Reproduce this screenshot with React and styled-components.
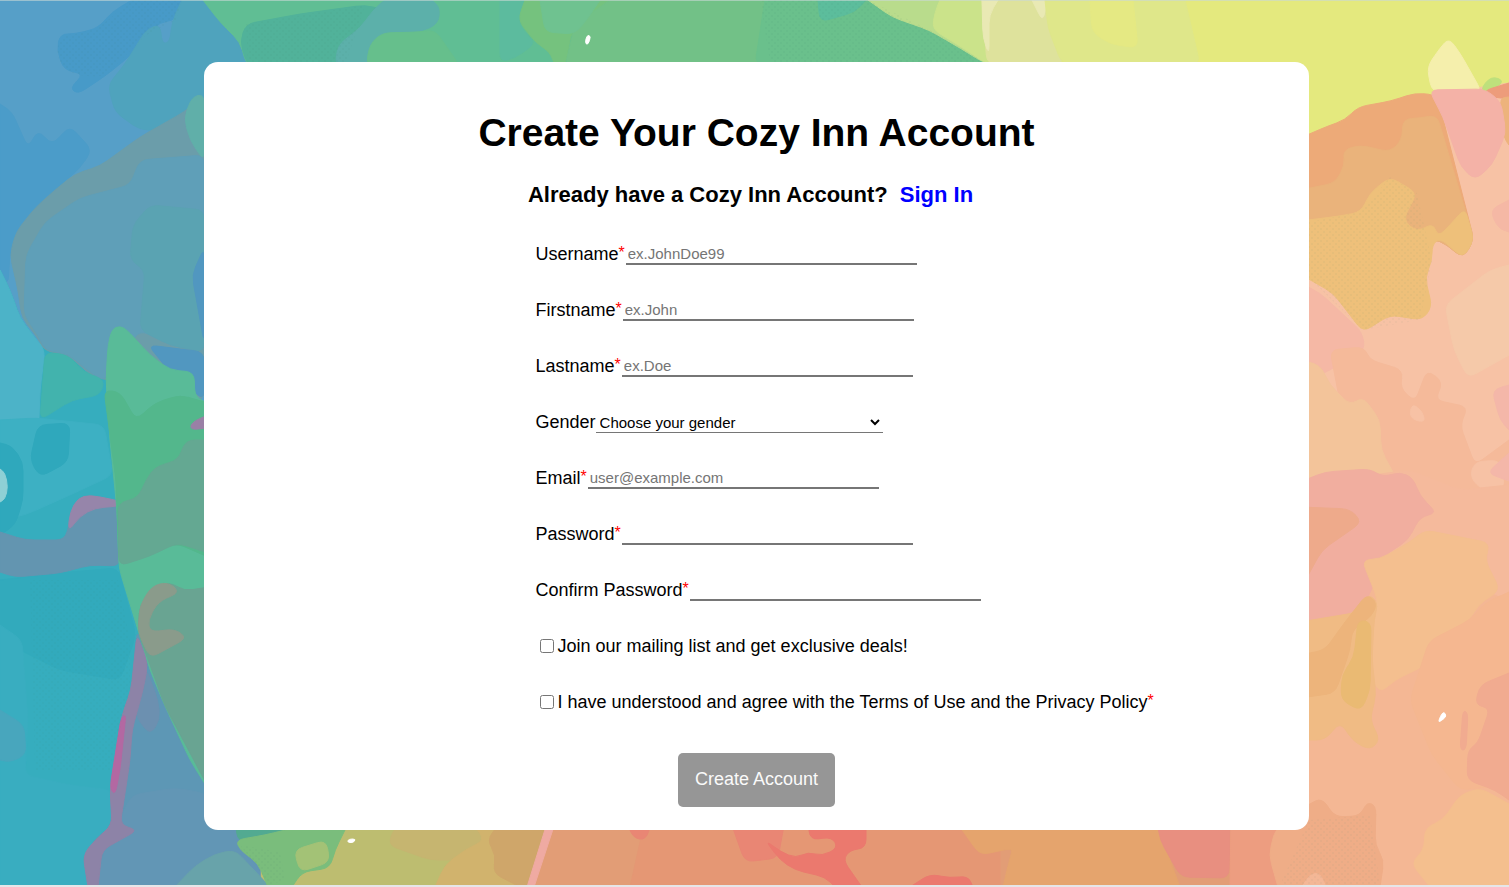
import React from "react";
import styled, { createGlobalStyle } from "styled-components";

const GlobalStyle = createGlobalStyle`
  *, *::before, *::after { box-sizing: border-box; }
  body {
    margin: 0;
    background: #e6e6e8;
    color: #000;
    font-family: "Liberation Sans", Arial, sans-serif;
    font-size: 18px;
    line-height: 24px;
  }
`;

const Page = styled.div`
  display: grid;
  grid-template: minmax(0, 1fr) / minmax(0, 1fr);
  min-height: 100vh;
  border-bottom: 2px solid #e6e6e8;
`;

const Backdrop = styled.svg`
  grid-area: 1 / 1;
  width: 100%;
  height: 100%;
  min-height: 0;
  contain: size;
`;

const Main = styled.main`
  grid-area: 1 / 1;
  z-index: 1;
  padding: 62px 200px 55px 204px;

  @media (max-width: 1200px) {
    padding: 32px;
  }
`;

const Card = styled.section`
  display: flex;
  flex-direction: column;
  padding: 48px 0 23px;
  border-radius: 14px;
  background: #fff;
`;

const Title = styled.h1`
  margin: 0 0 26px;
  font-size: 39px;
  line-height: 46px;
  text-align: center;
`;

const Prompt = styled.h2`
  display: flex;
  justify-content: center;
  gap: 12px;
  margin: 0 0 34px;
  padding-right: 12px;
  font-size: 22px;
  line-height: 26px;
`;

const SignInLink = styled.a`
  color: #00f;
  text-decoration: none;
`;

const Form = styled.form`
  display: flex;
  flex-direction: column;
`;

const Fields = styled.div`
  display: flex;
  flex-direction: column;
  gap: 32px;
  padding-left: 30%;

  @media (max-width: 1200px) {
    padding-left: 32px;
  }
`;

const Row = styled.div`
  display: flex;
  align-items: ${(p) => (p.$check ? "center" : "flex-start")};
  min-height: 24px;
`;

const Star = styled.span`
  margin-right: 1px;
  color: #f00;
  font-size: 16px;
  line-height: 16px;
  vertical-align: 2px;
`;

const TextInput = styled.input`
  width: 291px;
  height: 21px;
  margin: 2px 0 0;
  padding: 1px 2px;
  border: 0;
  border-bottom: 2px solid #767676;
  border-radius: 0;
  outline: 0;
  background: transparent;
  font: 15px/17px "Liberation Sans", Arial, sans-serif;

  &::placeholder { color: #757575; }
`;

const Select = styled.select`
  width: 287px;
  height: 21px;
  margin: 2px 0 0;
  padding: 0;
  border: 0;
  border-bottom: 1px solid #767676;
  border-radius: 0;
  background: transparent;
  color: #000;
  font: 15px/17px "Liberation Sans", Arial, sans-serif;
`;

const CheckBox = styled.input`
  width: 14px;
  height: 14px;
  margin: 0 4px;
`;

const SubmitButton = styled.button`
  align-self: center;
  height: 54px;
  margin-top: 39px;
  padding: 0 17px 2px;
  border: 0;
  border-radius: 5px;
  background: #969696;
  color: #fafafa;
  font: 18px/24px "Liberation Sans", Arial, sans-serif;
`;

const textFields = [
  { id: "username", label: "Username", placeholder: "ex.JohnDoe99", type: "text" },
  { id: "firstname", label: "Firstname", placeholder: "ex.John", type: "text" },
  { id: "lastname", label: "Lastname", placeholder: "ex.Doe", type: "text" },
];

const accountFields = [
  { id: "email", label: "Email", placeholder: "user@example.com", type: "email" },
  { id: "password", label: "Password", type: "password" },
  { id: "confirm", label: "Confirm Password", type: "password" },
];

// Watercolour patches, painted back to front: [fill, path].
const patches = [
  // ground
  ["#569fc8", "M0 0H760V600H0Z"],
  ["#36adbe", "M0 380H130V887H0Z"],
  ["#5d97b4", "M130 600H260V887H130Z"],
  ["#bdbd70", "M235 800H560V887H235Z"],
  // blue corner
  ["#4b9cc9", "M0 104L12 112 20 130 28 148 38 130 52 145 70 126 92 150 80 168 55 190 35 210 10 250 8 285 0 272Z"],
  ["#479ac8", "M57 50L60 34 75 34 98 28 112 12 132 0H182L176 20 160 22 145 36 130 56 105 76 78 94 70 88 84 74 64 70Z"],
  ["#4fa3bd", "M182 0H206L245 40 250 62V130H140L115 112 108 85 125 64 146 30 160 24 162 44 170 42 172 22Z"],
  ["#6b9daa", "M10 255L16 232 35 208 55 190 75 174 100 166 140 137 184 112 204 96V400H140L95 378 68 356 45 352 38 338 22 318 18 290Z"],
  ["#5f9fb8", "M26 255L45 222 80 198 130 185 140 160 204 155V352L170 345 140 330 105 380 95 376 68 354 45 350 38 335 24 315Z"],
  ["#5aa3b2", "M150 205L204 210V352L170 345 140 330 145 270 130 260 133 225Z"],
  ["#5197c0", "M204 248L192 275 204 342ZM148 345L204 352V400L170 372Z"],
  ["#60afa9", "M204 94L192 97 184 118 190 140 204 161V128Z"],
  // cyan side
  ["#36adbe", "M0 270L10 290 20 318 35 338 45 352 68 356 95 380 112 380 125 500 144 640 100 887H0Z"],
  ["#4cb3c8", "M0 270L10 290 20 318 35 338 45 350 40 390 36 500 0 520Z"],
  ["#42b3ad", "M45 352L68 355 84 372 105 380 100 395 72 400 40 420Z"],
  ["#3db0c3", "M0 420L36 418 104 425 113 475 70 495 25 515 0 520Z"],
  ["#2fa8bc", "M38 425L70 423 68 462 40 477 30 460ZM0 443L12 446 23 462 23 500 15 525 0 535Z"],
  ["#8ed0d5", "M0 469L5 473 8 487 5 499 0 502Z"],
  ["#32aabc", "M0 580L60 573 118 568 136 635 120 680 60 670 0 640Z"],
  ["#39adc0", "M0 625L22 640 28 720 25 775 70 785 112 790 112 825 90 845 95 887H0Z"],
  ["#48a6bd", "M0 710L24 725 26 755 10 762 0 760Z"],
  ["#6395b0", "M0 532L25 540 65 540 70 520 78 502 90 496 120 503V566L90 565 60 573 15 577 0 572Z"],
  ["#9685aa", "M68 532L70 512 78 498 90 495 120 501V506L95 508 80 516Z"],
  // slate wedge at the lower left
  ["#5d97b5", "M137 630L148 650 165 690 204 780 260 830V887H88L84 855 95 840 112 825 112 785 124 715 132 690Z"],
  ["#6c90b0", "M146 668L158 700 160 720 150 735 135 715Z"],
  ["#6296b5", "M132 795L175 788 204 793 260 830V887H96L104 850Z"],
  // green tongue
  ["#59bb98", "M106 380L108 345 112 329 120 326 127 330 150 355 170 370 194 372 195 398 215 405V800L190 760 165 706 150 670 138 630 119 568 117 510 110 440Z"],
  ["#53b78c", "M104 390L120 392 136 420 155 403 180 395 215 405V560L176 543 119 565 116 480Z"],
  ["#64a892", "M215 440H186L178 460 155 467 146 480 138 498 118 503 119 566 150 556 177 543 215 555Z"],
  ["#69a492", "M138 632L140 605 155 588 170 582 184 591 215 586V800L165 706Z"],
  ["#8a9b8b", "M138 632L140 605 152 586 168 582 180 592 158 602 148 620 150 632 175 629 187 638 150 658Z"],
  ["#9a80a6", "M215 412L192 422 190 430 215 427Z"],
  ["#8d83a7", "M137 634L148 664 143 690 132 730 130 760 124 800 120 825 138 830 102 850 98 887H88L83 855 95 840 112 825 110 788 122 715 131 690Z"],
  ["#b368a2", "M121 718L126 714 120 770 115 795 110 788Z"],
  // green top band
  ["#60be94", "M203 0H1000V66H247L240 42 220 22Z"],
  ["#51b29a", "M240 42L246 24 300 14 365 5 385 10 375 25 355 66H248Z"],
  ["#5cb0aa", "M335 66L338 45 360 28 375 8 385 0H432L440 8 438 24 420 32 382 33 366 66Z"],
  ["#66bf8c", "M366 66L370 44 382 33 420 32 435 30 460 66Z"],
  ["#5cbb9e", "M500 0H525L518 18 522 30 536 43 515 58 500 62Z"],
  ["#75c27e", "M525 0H610L590 24 572 30 565 66H555L550 52 536 43 518 20Z"],
  ["#72c187", "M610 0H780L765 30 760 66H565L575 25Z"],
  ["#6fc290", "M540 0H600L588 18 575 34 545 32Z"],
  ["#6ac08c", "M765 0H868L895 18 930 28 988 64H755Z"],
  ["#5cbd9c", "M818 0H866L855 12 820 22Z"],
  // yellow sky
  ["#e4e97e", "M1040 0H1509V150H1300V64H1040Z"],
  ["#b9dc8c", "M868 0H1000V64H986L960 48 929 30 892 17Z"],
  ["#cbe38a", "M940 0H1000V64H987L960 46 932 29 935 12Z"],
  ["#dee29c", "M982 0H1045L1064 64H987Z"],
  ["#e9e9b4", "M982 0H998L989 15 989 55 983 38ZM1032 0H1047L1043 22Z"],
  ["#dfe78a", "M1045 0H1185L1200 64H1062L1048 28Z"],
  ["#e5e983", "M1090 0H1133L1138 48 1110 44 1092 32Z"],
  // coral and peach side
  ["#f7c2a5", "M1300 170L1431 95 1509 83V530H1300Z"],
  ["#edaa78", "M1300 138L1328 126 1345 120 1358 107 1391 101 1415 93 1437 95 1474 240 1463 258 1440 240 1300 240Z"],
  ["#eab37b", "M1300 190L1335 183 1345 165 1343 150 1360 145 1390 152 1402 140 1403 119 1420 118 1437 115 1474 240 1463 258 1440 240 1300 240Z"],
  ["#eec07a", "M1300 221L1340 216 1361 212 1370 193 1390 177 1417 193 1403 220 1417 232 1433 223 1438 237 1450 225 1465 208 1474 240 1463 258 1440 238 1432 245 1432 261 1425 277 1432 307 1422 320 1390 315 1363 332 1333 293 1300 274Z"],
  ["#f5efac", "M1432 92L1427 67 1440 48 1449 38 1460 53 1482 92Z"],
  ["#bee07c", "M1480 90L1491 76 1505 81 1490 92Z"],
  ["#ed9c7b", "M1483 91L1509 83V98H1493Z"],
  ["#edb37c", "M1500 98L1509 97V145L1504 138Z"],
  ["#f4b2a7", "M1429 90L1485 89 1501 102 1506 133 1492 165 1475 180 1461 167 1443 117Z"],
  ["#f5b8a5", "M1300 283L1320 293 1362 332 1365 350 1330 370 1309 380 1300 370ZM1509 200L1490 210 1498 228 1509 232Z"],
  ["#f5c9a9", "M1509 265L1490 270 1445 305 1454 350 1468 378 1509 355Z"],
  ["#f5ba9a", "M1330 350L1364 347 1370 360 1403 370 1400 388 1415 402 1427 370 1443 382 1435 400 1468 407 1460 425 1475 465 1509 440V590L1425 560 1390 510 1300 500V410L1340 402Z"],
  ["#f3c49a", "M1300 360L1320 365 1330 385 1350 405 1363 397 1380 420 1381 450 1400 485 1300 485Z"],
  ["#f7c2a5", "M1412 403L1423 412 1425 423 1409 418ZM1474 462L1470 478 1485 492 1505 488 1500 460Z"],
  ["#f4b7a9", "M1509 385L1492 390 1500 420 1509 430ZM1509 453L1487 473 1509 481Z"],
  ["#f4b794", "M1300 530H1509V887H1300Z"],
  ["#f5ba9c", "M1300 485L1410 470 1460 490 1509 485V600L1485 590 1440 550 1300 560Z"],
  ["#f1ae9f", "M1300 482L1325 472 1370 469 1383 477 1400 472 1413 478 1420 496 1437 513 1420 517 1408 540 1378 560 1372 590 1363 605 1340 618 1300 623Z"],
  ["#eeaa8b", "M1300 507L1350 509 1362 522 1345 534 1322 550 1300 590Z"],
  ["#f4bf8f", "M1362 560L1380 559 1410 542 1425 530 1490 543 1485 560 1500 590 1478 605 1470 620 1432 640 1426 665 1395 680 1380 693 1367 670 1378 600Z"],
  ["#f0bb84", "M1300 622L1360 612 1368 594 1378 602 1374 620 1372 660 1376 695 1370 720 1380 740 1370 750 1354 742 1340 722 1325 740 1300 740Z"],
  ["#edb47b", "M1300 655L1325 650 1345 622 1367 594 1377 603 1372 616 1352 630 1350 650 1335 693 1300 698Z"],
  ["#eaba73", "M1358 620L1371 622 1370 690 1361 711 1341 700 1342 675 1354 657Z"],
  ["#f5b790", "M1429 641L1470 620 1485 603 1509 592V785L1460 790 1432 755 1410 700Z"],
  ["#f1ab90", "M1509 673L1480 685 1475 705 1490 708 1478 743 1468 750 1467 780 1495 790 1509 800ZM1463 710L1468 713 1466 750 1460 750Z"],
  ["#f4bf8e", "M1509 804L1480 788 1460 795 1443 820 1425 828 1424 850 1411 863 1430 887H1509Z"],
  // bottom band
  ["#68a3aa", "M175 887L195 866 215 854 235 850 270 887Z"],
  ["#52aa91", "M235 820H320L270 840 238 842Z"],
  ["#7abd7c", "M236 840L265 835 318 822 350 820 335 850 330 868 302 872 292 887H268L258 863 240 850Z"],
  ["#a3c276", "M294 850L326 840 330 862 300 872Z"],
  ["#c6b570", "M395 826H520V860H430L388 845Z"],
  ["#d1b36d", "M435 887L445 865 465 850 485 840 470 820H550V887Z"],
  ["#cfa66a", "M487 840L502 820H565L530 887H520L493 873 496 855Z"],
  ["#e29d76", "M549 820H1300V887H530Z"],
  ["#efaaa2", "M548 820H556L534 887H527Z"],
  ["#e59774", "M645 820H1000V887H630L635 865Z"],
  ["#e98674", "M626 820H652L646 840 633 838ZM730 820H785L778 858 745 862Z"],
  ["#eb796e", "M765 840L781 852 796 858 808 852 822 856 838 848 832 837 810 840 808 820H866V848L850 850 843 860 862 887H835L825 877 795 870 780 860ZM910 887L930 874 950 878 968 876 973 887Z"],
  ["#e5a46d", "M955 820H1155L1180 887H1003L1010 858 1013 848 980 855Z"],
  ["#e88f80", "M1157 820H1230L1229 878 1181 877 1160 840Z"],
  ["#ed9d80", "M1231 820H1290V887H1230Z"],
  ["#efad87", "M1278 887L1269 855 1275 830 1309 804 1322 798 1335 817 1360 816 1367 802 1376 806 1375 845 1384 860 1380 887Z"],
  ["#f4b796", "M1302 887L1310 874 1320 873 1326 887Z"],
  // paper flecks
  ["#fff", "M587 35L591 36 588 45 585 43ZM1443 711L1447 716 1441 721 1438 722ZM349 839L356 839 353 843 347 842Z"],
];

const CORNER = 9;
const onEdge = ([x, y]) => x <= 0 || x >= 1509 || y <= 0 || y >= 887;

// Reads the M/L/H/V outline of one patch as a list of points.
function readPoints(outline) {
  const tokens = outline.match(/[MLHV]|-?\d+/g) || [];
  const points = [];
  let command = "M";
  let last = [0, 0];
  for (let i = 0; i < tokens.length; ) {
    if (/[MLHV]/.test(tokens[i])) {
      command = tokens[i];
      i += 1;
      continue;
    }
    if (command === "H") last = [Number(tokens[i++]), last[1]];
    else if (command === "V") last = [last[0], Number(tokens[i++])];
    else last = [Number(tokens[i++]), Number(tokens[i++])];
    points.push(last);
  }
  return points;
}

// Rounds each vertex so the patches get soft, brush-like outlines.
function soften(d) {
  return d
    .split("Z")
    .filter(Boolean)
    .map((outline) => {
      const pts = readPoints(outline);
      const toward = (a, b) => {
        const length = Math.hypot(b[0] - a[0], b[1] - a[1]) || 1;
        const t = Math.min(CORNER, length / 2) / length;
        return [a[0] + (b[0] - a[0]) * t, a[1] + (b[1] - a[1]) * t];
      };
      const segments = pts.map((p, i) => {
        const lead = i === 0 ? "M" : "L";
        if (onEdge(p)) return `${lead}${p}`;
        const before = toward(p, pts[(i + pts.length - 1) % pts.length]);
        const after = toward(p, pts[(i + 1) % pts.length]);
        return `${lead}${before}Q${p} ${after}`;
      });
      return `${segments.join("")}Z`;
    })
    .join("");
}

const outlines = patches.map(([fill, d]) => [fill, soften(d)]);

function Watercolour() {
  return (
    <Backdrop viewBox="0 0 1509 885" preserveAspectRatio="none" aria-hidden="true">
      <defs>
        <pattern id="grain" width="6" height="6" patternUnits="userSpaceOnUse">
          <circle cx="1" cy="1" r="0.7" fill="#3a7868" />
          <circle cx="4" cy="4" r="0.7" fill="#3a7868" />
        </pattern>
      </defs>
      {outlines.map(([fill, d], i) => (
        <path key={i} d={d} fill={fill} stroke={fill} strokeWidth="1" strokeLinejoin="round" />
      ))}
      <g fill="url(#grain)">
        <path opacity="0.15" d="M57 50Q60 34 75 34L98 28 132 0H182L176 20 145 36 105 76Q58 80 57 50ZM246 24L365 5 345 66H248ZM760 0H868L930 30 985 62H770ZM240 845L280 852 285 880 270 885Z" />
        <path opacity="0.12" d="M1309 222L1361 212 1390 177 1417 193 1432 261 1420 320 1363 330 1309 278ZM1309 820L1370 815 1380 885H1280ZM30 580H118L130 640V690L110 770H35Z" />
      </g>
      <path d="M0 0.5H1509" stroke="#c9d8d6" strokeOpacity="0.6" />
    </Backdrop>
  );
}

function TextField({ id, label, placeholder, type }) {
  return (
    <Row>
      <label htmlFor={id}>
        {label}
        <Star>*</Star>
      </label>
      <TextInput id={id} name={id} type={type} placeholder={placeholder} required />
    </Row>
  );
}

export default function App() {
  return (
    <>
      <GlobalStyle />
      <Page>
        <Watercolour />
        <Main>
          <Card>
            <Title>Create Your Cozy Inn Account</Title>
            <Prompt>
              <span>Already have a Cozy Inn Account?</span>
              <SignInLink href="#signin">Sign In</SignInLink>
            </Prompt>
            <Form onSubmit={(e) => e.preventDefault()}>
              <Fields>
                {textFields.map((f) => (
                  <TextField key={f.id} {...f} />
                ))}
                <Row>
                  <label htmlFor="gender">Gender</label>
                  <Select id="gender" name="gender" defaultValue="">
                    <option value="">Choose your gender</option>
                    <option value="female">Female</option>
                    <option value="male">Male</option>
                    <option value="other">Other</option>
                  </Select>
                </Row>
                {accountFields.map((f) => (
                  <TextField key={f.id} {...f} />
                ))}
                <Row $check>
                  <CheckBox id="mailing" type="checkbox" />
                  <label htmlFor="mailing">Join our mailing list and get exclusive deals!</label>
                </Row>
                <Row $check>
                  <CheckBox id="terms" type="checkbox" required />
                  <label htmlFor="terms">
                    I have understood and agree with the Terms of Use and the Privacy Policy
                    <Star>*</Star>
                  </label>
                </Row>
              </Fields>
              <SubmitButton type="submit">Create Account</SubmitButton>
            </Form>
          </Card>
        </Main>
      </Page>
    </>
  );
}
